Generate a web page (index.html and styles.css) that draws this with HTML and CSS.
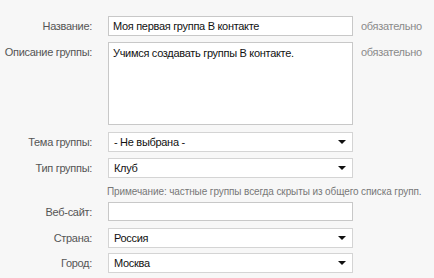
FILE: index.html
```html
<!DOCTYPE html>
<html lang="ru">
<head>
    <meta charset="UTF-8">
    <title>Создание группы</title>
    <link rel="stylesheet" href="styles.css">
</head>
<body>
    <form class="group-form">
        <div class="row">
            <label class="label" for="name">Название:</label>
            <input class="field" type="text" id="name" value="Моя первая группа В контакте">
            <span class="hint">обязательно</span>
        </div>
        <div class="row row-area">
            <label class="label" for="desc">Описание группы:</label>
            <textarea class="field area" id="desc">Учимся создавать группы В контакте.</textarea>
            <span class="hint">обязательно</span>
        </div>
        <div class="row">
            <label class="label">Тема группы:</label>
            <div class="field select"><span>- Не выбрана -</span><i class="arrow"></i></div>
        </div>
        <div class="row">
            <label class="label">Тип группы:</label>
            <div class="field select"><span>Клуб</span><i class="arrow"></i></div>
        </div>
        <div class="note">Примечание: частные группы всегда скрыты из общего списка групп.</div>
        <div class="row">
            <label class="label" for="site">Веб-сайт:</label>
            <input class="field site" type="text" id="site">
        </div>
        <div class="row">
            <label class="label">Страна:</label>
            <div class="field select"><span>Россия</span><i class="arrow"></i></div>
        </div>
        <div class="row row-last">
            <label class="label">Город:</label>
            <div class="field select"><span>Москва</span><i class="arrow"></i></div>
        </div>
    </form>
</body>
</html>
```

FILE: styles.css
```css
body {
    margin: 0;
    background-color: #f7f7f7;
    font-family: "Liberation Sans", Arial, sans-serif;
    font-size: 11px;
    letter-spacing: -0.3px;
}
.group-form {
    padding-top: 16px;
}
.row {
    display: flex;
    align-items: flex-start;
    margin-bottom: 6px;
}
.row-area {
    margin-bottom: 7px;
}
.row-last {
    margin-top: -1px;
}
.label {
    flex-shrink: 0;
    width: 92px;
    text-align: right;
    white-space: nowrap;
    color: #555;
    line-height: 20px;
    margin-right: 16px;
}
.field {
    flex-shrink: 0;
    box-sizing: border-box;
    width: 245px;
    height: 20px;
    margin: 0;
    padding: 0 4px;
    border: 1px solid #c8c8c8;
    background-color: #fff;
    color: #111;
    font-family: inherit;
    font-size: 11px;
    letter-spacing: -0.3px;
    line-height: 18px;
    outline: none;
}
.area {
    height: 83px;
    padding: 3px 4px;
    line-height: 14px;
    resize: none;
    overflow: hidden;
}
.site {
    height: 19px;
}
.select {
    display: flex;
    align-items: center;
    justify-content: space-between;
    padding: 0 5px;
    border-color: #d4d4d4;
}
.arrow {
    width: 0;
    height: 0;
    border-left: 4px solid transparent;
    border-right: 4px solid transparent;
    border-top: 4px solid #111;
    margin-right: 1px;
}
.hint {
    color: #8a8a8a;
    margin-left: 8px;
    line-height: 20px;
    white-space: nowrap;
}
.note {
    margin-left: 107px;
    color: #777;
    font-size: 10px;
    letter-spacing: -0.1px;
    line-height: 12px;
    margin-top: 8px;
    margin-bottom: 4px;
    white-space: nowrap;
}
```
